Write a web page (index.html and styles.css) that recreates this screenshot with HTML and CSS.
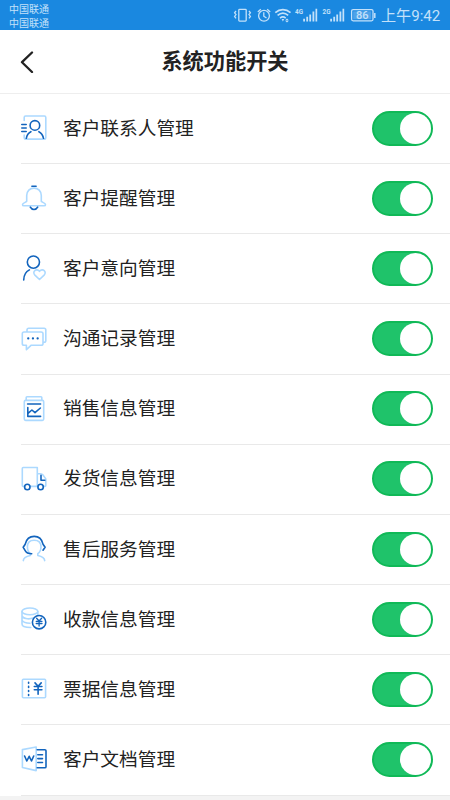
FILE: index.html
```html
<!DOCTYPE html>
<html lang="zh-CN">
<head>
<meta charset="utf-8">
<title>系统功能开关</title>
<link rel="stylesheet" href="styles.css">
</head>
<body>
<div class="status">
  <div class="carriers"><span>中国联通</span><span>中国联通</span></div>
  <svg class="status-icons" viewBox="0 0 144 30" width="144" height="30">
    <g fill="none" stroke="currentColor" stroke-width="1.3">
      <rect x="6.8" y="9.3" width="7.4" height="11.8" rx="0.8"/>
      <path d="M4 11l-1.4 1.8L4 14.6l-1.4 1.8L4 18.4M17 11l1.4 1.8-1.4 1.8 1.4 1.8-1.4 2"/>
      <circle cx="32" cy="15.8" r="5.4"/>
      <path d="M31.8 12.2v4l2.7 1.8M25.8 12l3-2.7M38.2 12l-3-2.7"/>
      <path d="M43.3 12.6c4.5-4 10.7-4 15.2 0M45.6 15.4c3.3-2.9 7.3-2.9 10.6 0M48 18.1c1.8-1.5 3.9-1.5 5.7 0" stroke-width="1.6"/>
      <rect x="119.6" y="9.6" width="21.4" height="11.2" rx="1.5"/>
      <path d="M142.8 13v5" stroke-width="1.5"/>
    </g>
    <rect x="121.2" y="11.3" width="18" height="8" fill="#7bbaf0" opacity=".55"/>
    <path fill="currentColor" d="M49.6 19h2.6l-1.3 2.4zM55 18.4l1.8 1.9h-3.6zM55 22.4l1.8-1.7h-3.6z"/>
    <g fill="currentColor">
      <path d="M71.2 18.7h1.8v2.7h-1.8zM74.3 16.8h1.8v4.6h-1.8zM77.3 14.5h1.8v6.9h-1.8zM80.5 11.5h1.8v9.9h-1.8zM83.5 8.8h1.7v12.6h-1.7z"/>
      <path d="M98.2 18.7h1.8v2.7h-1.8zM101.3 16.8h1.8v4.6h-1.8zM104.3 14.5h1.8v6.9h-1.8zM107.5 11.5h1.8v9.9h-1.8zM110.5 8.8h1.7v12.6h-1.7z"/>
      <text class="net" x="63" y="14" textLength="8" lengthAdjust="spacingAndGlyphs">4G</text>
      <text class="net" x="90.5" y="14" textLength="8" lengthAdjust="spacingAndGlyphs">2G</text>
      <text class="charge" x="130.3" y="19.2" text-anchor="middle">86</text>
    </g>
  </svg>
  <span class="clock">上午9:42</span>
</div>
<header class="header">
  <svg class="back" viewBox="0 0 14 22" width="14" height="22"><path d="M12 1.5L2 11.2 12 21"/></svg>
  <h1>系统功能开关</h1>
</header>
<main class="list">
  <div class="row">
    <svg class="icon" viewBox="0 0 28 28">
      <path class="light" d="M4.2 6.5V3.4Q4.2 2 5.6 2H24.4Q25.8 2 25.8 3.4V23.7Q25.8 25.1 24.4 25.1H5.6Q4.2 25.1 4.2 23.7V21"/>
      <path class="dark" d="M1.8 10.5h4.4M1.8 14h4.4M1.8 17.5h4.4M6.3 24.3c.5-2.8 2.3-5.5 4.6-6.6M23.5 24.3c-.6-2.8-2.3-5.5-4.6-6.6"/>
      <circle class="dark" cx="14.9" cy="11.4" r="4.8"/>
    </svg>
    <span class="label">客户联系人管理</span><span class="switch"></span>
  </div>
  <div class="row">
    <svg class="icon" viewBox="0 0 28 28">
      <path class="light" d="M6.7 17.3V11.6c0-4.5 3.2-7.5 7.3-7.5s7.3 3 7.3 7.5v5.7c1 1.5 4.2 1.4 4.2 3.4 0 .9-.6 1.1-1.5 1.1H4c-.9 0-1.5-.2-1.5-1.1 0-2 3.2-1.9 4.2-3.4z"/>
      <path class="dark" d="M11.9 2.2h4.2M10.3 23.2c1.6 3 5.8 3 7.4 0"/>
    </svg>
    <span class="label">客户提醒管理</span><span class="switch"></span>
  </div>
  <div class="row">
    <svg class="icon" viewBox="0 0 28 28">
      <circle class="dark" cx="13.4" cy="8.1" r="6.1"/>
      <path class="dark" d="M3.7 26c.1-4.7 2.2-8.3 5.7-10.1"/>
      <path class="light" d="M19.5 25.5l-4.6-4.4c-3.2-3.2 1.4-7.5 4.6-3.8 3.2-3.7 7.8.6 4.6 3.8z"/>
    </svg>
    <span class="label">客户意向管理</span><span class="switch"></span>
  </div>
  <div class="row">
    <svg class="icon" viewBox="0 0 28 28">
      <path class="light" d="M7 6.7V4.9Q7 3.2 8.7 3.2H24.1Q25.8 3.2 25.8 4.9V15.7Q25.8 17.4 23.3 17.4M4 7H21.2Q23 7 23 8.7V18.4Q23 20.2 21.2 20.2H11.3L6.4 24.6V20.2H4Q2.3 20.2 2.3 18.4V8.7Q2.3 7 4 7z"/>
      <path class="dark dots" d="M8.2 13.4h.1M12.9 13.4h.1M17.6 13.4h.1"/>
    </svg>
    <span class="label">沟通记录管理</span><span class="switch"></span>
  </div>
  <div class="row">
    <svg class="icon" viewBox="0 0 28 28">
      <rect class="light" x="4.3" y="5.4" width="19.4" height="20" rx="1.3"/>
      <path class="light" d="M6.2 5.2V2.5Q6.2 1.7 7 1.7H21Q21.8 1.7 21.8 2.5V5.2"/>
      <path class="dark" d="M7.6 9H20.6M7.8 12.5v8.9H20.6M8.3 18.1l3.6-3.1 3.1 2.7 5.4-4.7"/>
    </svg>
    <span class="label">销售信息管理</span><span class="switch"></span>
  </div>
  <div class="row">
    <svg class="icon" viewBox="0 0 28 28">
      <path class="light" d="M4.7 21.4H3.2Q2.3 21.4 2.3 20.5V3.4Q2.3 2.5 3.2 2.5H17.3V21.4M10 21.4h7.6M17.6 8.7H20.6Q22.1 8.7 23 10L25.8 13.9V20.5Q25.8 21.4 24.8 21.4H23.5"/>
      <circle class="dark" cx="7.3" cy="22" r="2.7"/><circle class="dark" cx="20.6" cy="22" r="2.7"/>
      <path class="dark" d="M21 10.3v5h3.8"/>
    </svg>
    <span class="label">发货信息管理</span><span class="switch"></span>
  </div>
  <div class="row">
    <svg class="icon" viewBox="0 0 28 28">
      <path class="light" d="M3.3 25.6c.1-3.1 3.2-4.3 7.1-5.1v-1.8C8.2 17 7.4 14.3 7.4 11.7c0-4.2 2.6-6.5 6.7-6.5s6.9 2.3 6.9 6.5c0 2.8-1.1 5.5-3.2 7v1.8c3.9.8 6.7 2 6.9 5.1"/>
      <path class="dark" d="M5.2 9.1c1.2-4.8 4.7-7.7 9-7.7s7.7 2.9 8.8 7.7M5.2 9.2l-2 3.1 2 3.4c1 2.1 3 3.1 6.5 3.1M23 9.2l2.1 3.1-2.1 2.9"/>
    </svg>
    <span class="label">售后服务管理</span><span class="switch"></span>
  </div>
  <div class="row">
    <svg class="icon" viewBox="0 0 28 28">
      <ellipse class="light" cx="9.9" cy="6.4" rx="7.9" ry="3.4"/>
      <path class="light" d="M2 6.4V19c0 2.2 3.5 3.5 8.8 3.5M17.8 6.4v3.2M2 10.7c.7 2.8 6.4 4 11.1 2.4M2 15c.8 2 4.2 3.2 8 3.2"/>
      <circle class="dark" cx="19.1" cy="17.2" r="6.7"/>
      <path class="dark thin" d="M16.6 13.2l2.5 2.8 2.5-2.8M16.2 16.3h5.8M16.2 18.5h5.8M19.1 16.2v4.8"/>
    </svg>
    <span class="label">收款信息管理</span><span class="switch"></span>
  </div>
  <div class="row">
    <svg class="icon" viewBox="0 0 28 28">
      <rect class="light" x="2.4" y="4.3" width="23.2" height="18.4" rx="1"/>
      <path class="dark dash" d="M8.6 7.3v13.2"/>
      <path class="dark" d="M15 7.9l3.1 3.3 3.1-3.3M14.3 11.5h7.6M14.3 14.8h7.6M18.1 11.3v8"/>
    </svg>
    <span class="label">票据信息管理</span><span class="switch"></span>
  </div>
  <div class="row">
    <svg class="icon" viewBox="0 0 28 28">
      <path class="light" d="M2.4 4.6L16.2 2V25.6L2.4 22.5z"/>
      <path class="dark" d="M17.2 4.7H24.9Q26 4.7 26 5.8V21.7Q26 22.8 24.9 22.8H17.2M17.8 9.7h4.7M17.8 13.6h4.7M17.8 17.5h4.7M4.6 11l2.2 5 2.4-4.7 2.3 4.7 2.2-5"/>
    </svg>
    <span class="label">客户文档管理</span><span class="switch"></span>
  </div>
</main>
</body>
</html>
```

FILE: styles.css
```css
* { box-sizing: border-box; }
body {
  margin: 0;
  height: 800px;
  overflow: hidden;
  background: #f3f3f3;
  color: #222;
  font-family: "Noto Sans CJK SC", sans-serif;
}
.status {
  display: flex;
  height: 30px;
  padding-left: 9px;
  background: #1a88e0;
  color: #c3e1fa;
}
.carriers {
  display: flex;
  flex-direction: column;
  width: 223px;
  padding-top: 2px;
  font-size: 10px;
  line-height: 14px;
}
.status-icons { flex: none; }
.net { font: bold 8px Roboto, sans-serif; }
.charge { font: 500 11px Roboto, sans-serif; }
.clock {
  margin-left: 5px;
  font-family: Roboto, "Noto Sans CJK SC", sans-serif;
  font-size: 15.1px;
  line-height: 32px;
  white-space: nowrap;
}
.header {
  display: grid;
  grid-template-columns: 40px 1fr 40px;
  align-items: center;
  height: 64px;
  background: #fff;
  border-bottom: 1px solid #eee;
}
.back {
  margin-left: 20px;
  fill: none;
  stroke: #222;
  stroke-width: 2.3;
  stroke-linecap: round;
  stroke-linejoin: round;
}
h1 {
  margin: 0;
  padding-bottom: 4px;
  font-size: 21.2px;
  font-weight: 700;
  line-height: 30px;
  text-align: center;
}
.list {
  height: 702px;
  padding-left: 20px;
  background: #fff;
}
.row {
  display: flex;
  align-items: center;
  height: 70.17px;
  padding-right: 17.5px;
  padding-bottom: 1px;
  margin-left: 1px;
  border-bottom: 1px solid #e9e9e9;
}
.icon {
  flex: none;
  width: 28px;
  height: 28px;
  margin-left: -1px;
  fill: none;
  stroke-width: 1.6;
  stroke-linecap: round;
  stroke-linejoin: round;
}
.light { stroke: #acd9ff; }
.dark { stroke: #1264bd; }
.thin { stroke-width: 1.3; }
.dots { stroke-width: 2.2; }
.dash { stroke-dasharray: 1 3.1; }
.label {
  flex: 1;
  padding-bottom: 3px;
  margin-left: 15px;
  font-size: 18.7px;
  line-height: 28px;
}
.switch {
  display: flex;
  justify-content: flex-end;
  width: 60.5px;
  height: 35px;
  border: 2px solid #10b957;
  border-radius: 18px;
  background: #1fc36a;
}
.switch::before {
  content: "";
  width: 31px;
  height: 31px;
  border-radius: 50%;
  background: #fff;
}
```
